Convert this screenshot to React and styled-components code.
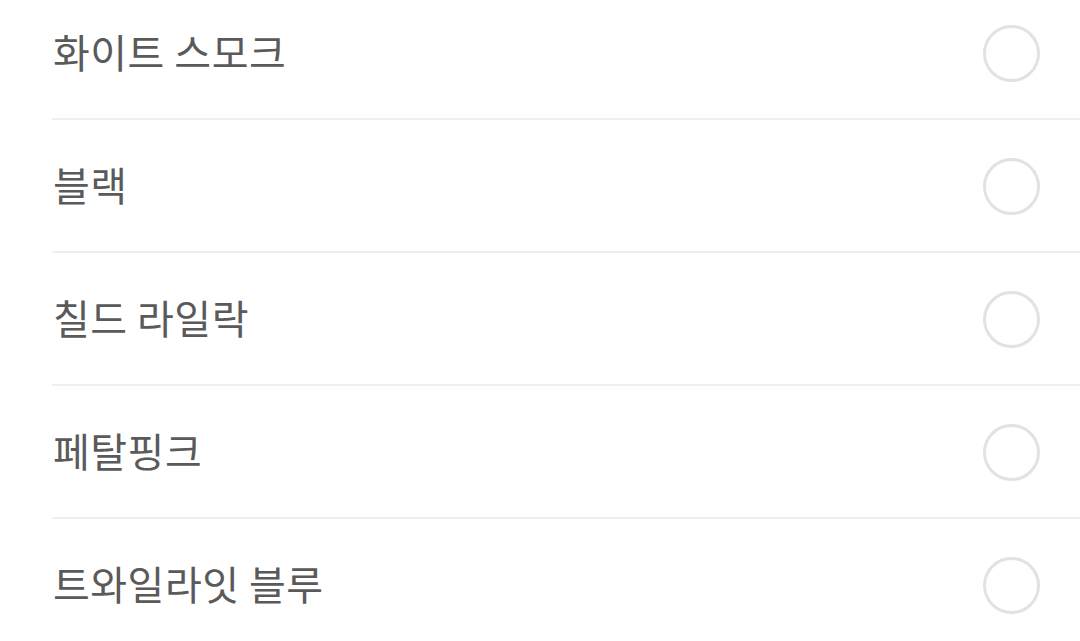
import React from "react";
import styled, { createGlobalStyle } from "styled-components";

const GlobalStyle = createGlobalStyle`
  html, body {
    margin: 0;
    padding: 0;
    background: #ffffff;
    overflow: hidden;
  }
  body {
    font-family: "Noto Sans CJK KR", "Noto Sans", sans-serif;
  }
`;

const List = styled.ul`
  list-style: none;
  margin: -13px 0 0 0;
  padding: 0 0 0 52px;
`;

const Row = styled.li`
  display: flex;
  align-items: center;
  justify-content: space-between;
  height: 131px;
  padding: 0 40px 0 1px;
  border-bottom: 2px solid #efefef;
`;

const Label = styled.span`
  font-size: 40px;
  color: #5a5a5a;
  letter-spacing: 0.5px;
  margin-top: -3px;
`;

const Radio = styled.span`
  box-sizing: border-box;
  width: 57px;
  height: 57px;
  border-radius: 50%;
  border: 3px solid #e2e2e2;
  margin-top: 2px;
`;

const colors = ["화이트 스모크", "블랙", "칠드 라일락", "페탈핑크", "트와일라잇 블루"];

export default function App() {
  return (
    <>
      <GlobalStyle />
      <List>
        {colors.map((name) => (
          <Row key={name}>
            <Label>{name}</Label>
            <Radio />
          </Row>
        ))}
      </List>
    </>
  );
}
